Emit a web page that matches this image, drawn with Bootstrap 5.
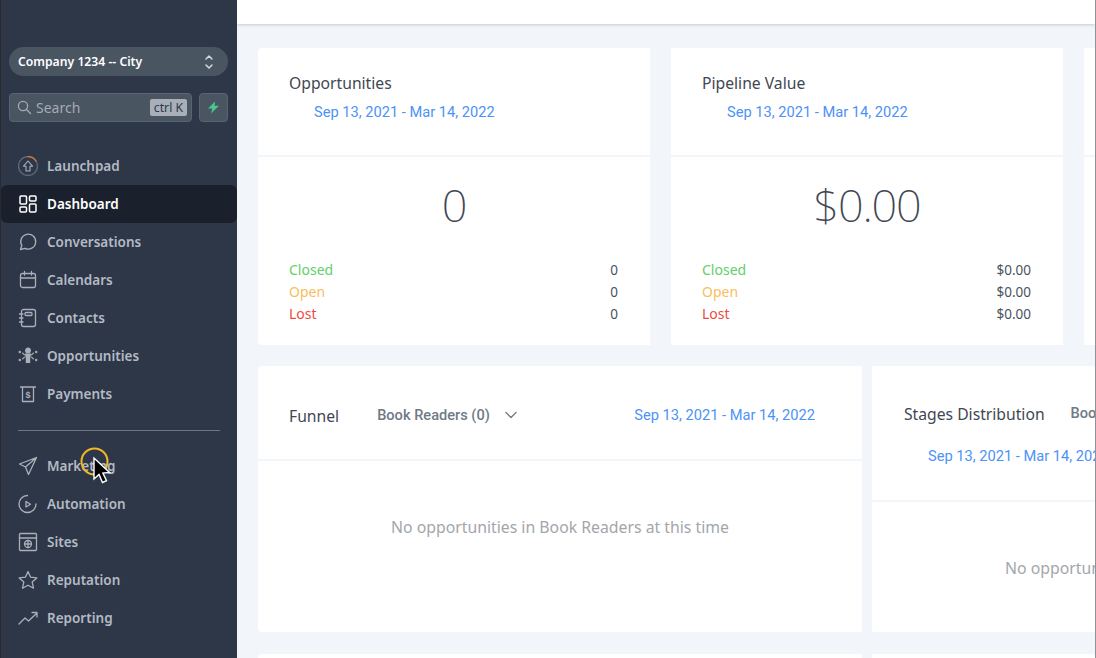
<!doctype html>
<html lang="en"><head><meta charset="utf-8"><title>Dashboard</title>
<link href="https://cdn.jsdelivr.net/npm/bootstrap@5.3.0/dist/css/bootstrap.min.css" rel="stylesheet">
<style>
html,body{height:658px;overflow:hidden}
body{background:#f2f6fa;font-family:"Noto Sans",sans-serif;color:#3f4753}
.shell{height:658px;width:1096px;overflow:hidden}
.side{width:237px;flex:none;background:#2d3748;border-left:1px solid #2a2a2e;height:658px;padding-top:47px;position:relative}
.loc{margin:0 9px 0 8px;height:29px;border-radius:15px;background:#4a5562;color:#fff;font-size:12.2px;font-weight:600;padding:2px 14px 0 9px}
.loc svg{margin-top:-2px}
.searchrow{margin:17px 9px 0 8px;gap:7px}
.sbox{height:29px;width:183px;background:#4a5562;border:1px solid #596472;border-radius:4px;color:#a4abb6;font-size:14px;padding:0 4px 0 7px}
.kbdk{background:#a9afb9;color:#2d3748;font-size:12.2px;border-radius:2px;line-height:17px;padding:0 4px;margin-left:auto}
.bolt{width:29px;height:29px;background:#4a5562;border:1px solid #596472;border-radius:4px}
.navgrp{margin-top:25px}
.nitem{height:38px;padding-left:17px;gap:9px;color:#b4bac4;font-size:13.5px;font-weight:600;margin:0}
.nitem span{padding-top:1px}
.nitem svg{width:20px;height:20px;flex:none;fill:none;stroke:#aab0ba;stroke-width:1.3;stroke-linecap:round;stroke-linejoin:round}
.nitem.on{background:#1a202c;color:#fff;border-radius:6px}
.nitem.on svg{stroke:#fff;stroke-width:1.5}
.sep{height:1px;background:#6b7480;margin:17px 17px 16px 17px}
.main{flex:1;min-width:0;overflow:hidden;border-right:1px solid #8f9296}
.topb{height:24px;background:#fff;box-shadow:0 1px 3px rgba(0,0,0,.18)}
.cols{padding:24px 0 0 21px}
.panel{background:#fff;border:0;flex:none}
.rl{border-radius:4px 0 0 4px}
.stat{width:392px;height:297px}
.stat-h{height:109px;padding:24px 32px 0 31px;border-bottom:2px solid #f2f6fa}
.ttl{font-size:15.7px;line-height:22px;color:#3f4753}
.dates{font-family:Roboto,sans-serif;font-size:14.65px;color:#4d92f8;line-height:20px}
.stat-h .dates{margin:8px 0 0 25px}
.num{font-family:"Noto Sans",sans-serif;font-weight:200;font-size:45px;letter-spacing:-1.2px;line-height:60px;text-align:center;color:#3f4753;margin-top:18px}
.rows{margin:24px 32px 0 31px;font-size:14px;line-height:22px}
.g{color:#5fd06b}.o{color:#f9bd5c}.r{color:#f0493f}
.rows .val{color:#4a5260;font-size:13.5px}
.row2{gap:10px;margin-top:21px}
.fun{width:604px;height:266px}
.fun-h{height:95px;border-bottom:2px solid #f2f6fa;padding:6px 47px 0 31px}
.fun-h .dates{margin-top:-2px}
.pick{font-family:Roboto,sans-serif;font-weight:500;font-size:14.6px;color:#6f7a86;margin-left:38px}
.empty{color:#a3a6ab;font-size:15.8px;text-align:center}
.stg{width:400px;height:266px}
.stg-h{height:136px;border-bottom:2px solid #f2f6fa;padding:37px 0 0 32px;white-space:nowrap}
.row3{gap:10px;margin-top:22px}
.cursorwrap{position:absolute;left:78px;top:446px;width:40px;height:42px;pointer-events:none}
</style></head><body>
<div class="shell d-flex">
<aside class="side">
 <div class="loc d-flex align-items-center justify-content-between"><span>Company 1234 -- City</span>
  <svg width="10" height="18" viewBox="0 0 10 18" fill="none" stroke="#d5d8dd" stroke-width="1.5" stroke-linecap="round" stroke-linejoin="round"><path d="M2 6l3-3 3 3M2 12l3 3 3-3"/></svg></div>
 <div class="searchrow d-flex">
  <div class="sbox d-flex align-items-center gap-1">
   <svg width="15" height="15" viewBox="0 0 15 15" fill="none" stroke="#a4abb6" stroke-width="1.3" stroke-linecap="round"><circle cx="6" cy="6" r="4.6"/><path d="M9.5 9.5l4 4"/></svg>
   <span>Search</span><span class="kbdk">ctrl K</span></div>
  <div class="bolt d-flex align-items-center justify-content-center"><svg width="13" height="13" viewBox="0 0 13 13"><path d="M8 .5L1 7.500h4.300L4 12.500l8-7.800H7.700z" fill="#48c78e"/></svg></div>
 </div>
 <nav class="navgrp">
  <div class="nitem d-flex align-items-center"><svg viewBox="0 0 20 20"><circle cx="10" cy="10" r="9.500" stroke="#5f6876"/><path d="M10 .5a9.500 9.500 0 0 1 8 4.500" stroke="#c9773c"/><path d="M10 5L5.500 10.200H8V15h4v-4.800h2.500z" stroke-width="1.100"/></svg><span>Launchpad</span></div>
  <div class="nitem on d-flex align-items-center"><svg viewBox="0 0 20 20"><rect x="2" y="2" width="6.500" height="8" rx="1"/><rect x="11.500" y="2" width="6.500" height="5" rx="1"/><rect x="2" y="13" width="6.500" height="5" rx="1"/><rect x="11.500" y="10" width="6.500" height="8" rx="1"/></svg><span>Dashboard</span></div>
  <div class="nitem d-flex align-items-center"><svg viewBox="0 0 20 20"><path d="M2.500 17.500l1.300-4A7.500 7.500 0 1 1 7 16.400z"/></svg><span>Conversations</span></div>
  <div class="nitem d-flex align-items-center"><svg viewBox="0 0 20 20"><rect x="2.500" y="3.500" width="15" height="14" rx="2"/><path d="M2.500 8h15M6.500 1.500v3.500M13.500 1.500v3.500"/></svg><span>Calendars</span></div>
  <div class="nitem d-flex align-items-center"><svg viewBox="0 0 20 20"><rect x="3.500" y="1.500" width="14" height="17" rx="2"/><rect x="7" y="4.500" width="7" height="3" rx="1"/><path d="M1.500 6h3.500M1.500 10h3.500M1.500 14h3.500"/></svg><span>Contacts</span></div>
  <div class="nitem d-flex align-items-center"><svg viewBox="0 0 20 20"><circle cx="10" cy="4.500" r="2.300" fill="#aab0ba"/><path d="M6.800 7.500h6.400l-1 5v4.500H7.800v-4.500z" fill="#aab0ba" stroke="none"/><g fill="#aab0ba" stroke="none"><circle cx="1.800" cy="6" r="1.200"/><circle cx="18.200" cy="6" r="1.200"/><circle cx="1.800" cy="14" r="1.200"/><circle cx="18.200" cy="14" r="1.200"/></g><path d="M4.500 7l2 1.800M4.500 13l2-1.800M15.500 7l-2 1.800M15.500 13l-2-1.800" stroke-width="1.100"/></svg><span>Opportunities</span></div>
  <div class="nitem d-flex align-items-center"><svg viewBox="0 0 20 20"><path d="M2.500 3h15M4.500 3v14.500h11V3"/><text x="10" y="14" text-anchor="middle" font-size="9" font-family="Liberation Sans" font-weight="700" fill="#aab0ba" stroke="none">$</text></svg><span>Payments</span></div>
 </nav>
 <div class="sep"></div>
 <nav>
  <div class="nitem d-flex align-items-center"><svg viewBox="0 0 20 20"><path d="M18.500 1.500L1.500 8l6 3 3 7.500zM7.500 11l11-9.500"/></svg><span>Marketing</span></div>
  <div class="nitem d-flex align-items-center"><svg viewBox="0 0 20 20"><path d="M18 10a8.500 8.500 0 1 1-8.500-8.500M9.500 18.500h-1"/><path d="M8 7.500l4.500 2.700L8 13z"/></svg><span>Automation</span></div>
  <div class="nitem d-flex align-items-center"><svg viewBox="0 0 20 20"><rect x="1.500" y="1.500" width="17" height="17" rx="1"/><path d="M1.500 6h17"/><circle cx="10" cy="12" r="3.500"/><path d="M6.500 12h7M10 8.500v7"/></svg><span>Sites</span></div>
  <div class="nitem d-flex align-items-center"><svg viewBox="0 0 20 20"><path d="M10 1.500l2.600 5.700 6.200.7-4.600 4.200 1.300 6.100L10 15.200l-5.500 3 1.300-6.100L1.200 7.900l6.200-.7z"/></svg><span>Reputation</span></div>
  <div class="nitem d-flex align-items-center"><svg viewBox="0 0 20 20"><path d="M1 16l6-6 3.500 3L19 5M14 4.500h5v4.500"/></svg><span>Reporting</span></div>
 </nav>
 <div class="cursorwrap">
  <svg width="40" height="42" viewBox="0 0 40 42"><circle cx="15.500" cy="15.500" r="13" fill="none" stroke="#f1b724" stroke-width="2"/><path d="M15 12v21l5-4.500 3.500 8 4-1.800-3.600-7.700 6.600-.5z" fill="#000" stroke="#fff" stroke-width="1.400"/></svg>
 </div>
</aside>
<main class="main">
 <div class="topb"></div>
 <div class="cols">
  <div class="d-flex" style="gap:21px">
   <section class="panel stat rl">
    <div class="stat-h"><div class="ttl">Opportunities</div><div class="dates">Sep 13, 2021 - Mar 14, 2022</div></div>
    <div class="num">0</div>
    <div class="rows">
     <div class="d-flex justify-content-between"><span class="g">Closed</span><span class="val">0</span></div>
     <div class="d-flex justify-content-between"><span class="o">Open</span><span class="val">0</span></div>
     <div class="d-flex justify-content-between"><span class="r">Lost</span><span class="val">0</span></div>
    </div>
   </section>
   <section class="panel stat">
    <div class="stat-h"><div class="ttl">Pipeline Value</div><div class="dates">Sep 13, 2021 - Mar 14, 2022</div></div>
    <div class="num">$0.00</div>
    <div class="rows">
     <div class="d-flex justify-content-between"><span class="g">Closed</span><span class="val">$0.00</span></div>
     <div class="d-flex justify-content-between"><span class="o">Open</span><span class="val">$0.00</span></div>
     <div class="d-flex justify-content-between"><span class="r">Lost</span><span class="val">$0.00</span></div>
    </div>
   </section>
   <section class="panel stat"><div class="stat-h"></div></section>
  </div>
  <div class="d-flex row2">
   <section class="panel fun rl">
    <div class="fun-h d-flex align-items-center">
     <span class="ttl">Funnel</span>
     <span class="pick d-flex align-items-center" style="gap:15px">Book Readers (0)
      <svg width="12" height="8" viewBox="0 0 12 8" fill="none" stroke="#6f7a86" stroke-width="1.300" stroke-linecap="round" stroke-linejoin="round"><path d="M1 1.500l5 5 5-5"/></svg></span>
     <span class="dates ms-auto">Sep 13, 2021 - Mar 14, 2022</span>
    </div>
    <div class="empty" style="margin-top:55px">No opportunities in Book Readers at this time</div>
   </section>
   <section class="panel stg">
    <div class="stg-h">
     <div class="d-flex align-items-center"><span class="ttl">Stages Distribution</span><span class="pick" style="margin-left:26px">Book Readers (0)</span></div>
     <div class="dates" style="margin:21px 0 0 24px">Sep 13, 2021 - Mar 14, 2022</div>
    </div>
    <div class="empty text-start" style="margin:55px 0 0 133px;white-space:nowrap">No opportunities in Book Readers at this time</div>
   </section>
  </div>
  <div class="d-flex row3">
   <section class="panel fun rl"></section>
   <section class="panel stg"></section>
  </div>
 </div>
</main>
</div>
<script src="https://cdn.jsdelivr.net/npm/bootstrap@5.3.0/dist/js/bootstrap.bundle.min.js"></script>
</body></html>
